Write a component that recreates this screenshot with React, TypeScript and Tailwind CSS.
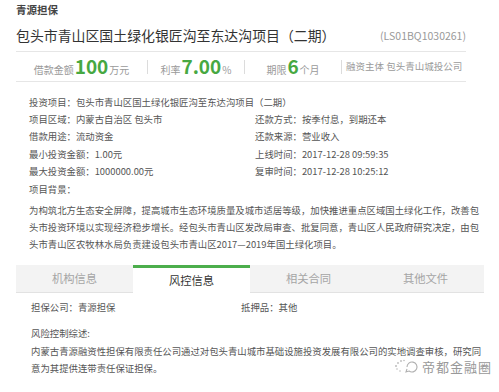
import React from 'react';

const font = { fontFamily: '"Noto Sans CJK SC", "Noto Sans", sans-serif' };

const Sep = () => <span className="w-px h-[14px] bg-[#dcdcdc]" />;

const Stat: React.FC<{ label: string; value: string; unit: string; w: string }> = ({ label, value, unit, w }) => (
  <div className={`flex items-baseline justify-center ${w}`}>
    <span className="text-[10px] text-[#9a9a9a]">{label}</span>
    <span className="text-[19px] font-bold text-[#47a842] leading-none mx-[1px]">{value}</span>
    <span className="text-[10px] text-[#9a9a9a]">{unit}</span>
  </div>
);

const InfoRow: React.FC<{ left: string; right?: string }> = ({ left, right }) => (
  <div className="flex h-[17.4px] items-center">
    <div className="w-[226px] whitespace-nowrap">{left}</div>
    {right && <div className="whitespace-nowrap">{right}</div>}
  </div>
);

const tabs = ['机构信息', '风控信息', '相关合同', '其他文件'];

export default function App() {
  return (
    <div className="w-[499px] h-[392px] bg-white relative overflow-hidden" style={font}>
      <div className="px-4 w-[482px]">
        <div className="h-[20px] flex items-center text-[10.5px] font-bold text-[#444]">青源担保</div>
        <div className="h-[32px] flex items-center justify-between border-b border-[#e6e6e6]">
          <span className="text-[13.9px] text-[#333]">包头市青山区国土绿化银匠沟至东达沟项目（二期）</span>
          <span className="text-[10.5px] text-[#999]">(LS01BQ1030261)</span>
        </div>
        <div className="h-[30px] flex items-center border-b border-[#e6e6e6]">
          <Stat label="借款金额" value="100" unit="万元" w="w-[131px]" />
          <Sep />
          <Stat label="利率" value="7.00" unit="%" w="w-[96px]" />
          <Sep />
          <Stat label="期限" value="6" unit="个月" w="w-[96px]" />
          <Sep />
          <div className="flex-1 pl-[4px] whitespace-nowrap text-[9.5px] text-[#9a9a9a]">融资主体 包头青山城投公司</div>
        </div>
        <div className="pt-[11px] pl-[13px] text-[9.4px] text-[#555]">
          <InfoRow left="投资项目：包头市青山区国土绿化银匠沟至东达沟项目（二期）" />
          <InfoRow left="项目区域：内蒙古自治区 包头市" right="还款方式：按季付息，到期还本" />
          <InfoRow left="借款用途：流动资金" right="还款来源：营业收入" />
          <InfoRow left="最小投资金额：1.00元" right="上线时间：2017-12-28 09:59:35" />
          <InfoRow left="最大投资金额：1000000.00元" right="复审时间：2017-12-28 10:25:12" />
          <InfoRow left="项目背景：" />
          <p className="leading-[16.6px] pt-[5px] whitespace-nowrap">
            为构筑北方生态安全屏障，提高城市生态环境质量及城市适居等级，加快推进重点区域国土绿化工作，改善包
            <br />
            头市投资环境以实现经济稳步增长。经包头市青山区发改局审查、批复同意，青山区人民政府研究决定，由包
            <br />
            头市青山区农牧林水局负责建设包头市青山区2017—2019年国土绿化项目。
          </p>
        </div>
        <div className="mt-[13px] grid grid-cols-4 h-[28px] w-[468px]">
          {tabs.map((t, i) =>
            i === 1 ? (
              <div key={t} className="flex items-center justify-center border-t-[3px] border-[#4cae4c] bg-white text-[11.3px] text-[#333]">
                {t}
              </div>
            ) : (
              <div key={t} className="flex items-center justify-center bg-[#f3f3f3] border-b border-[#e2e2e2] text-[11.3px] text-[#a5a5a5]">
                {t}
              </div>
            )
          )}
        </div>
        <div className="h-[28px] flex items-center text-[9.4px] text-[#555] pl-[15px]">
          <div className="w-[210px]">担保公司：青源担保</div>
          <div>抵押品：其他</div>
        </div>
        <div className="pl-[15px] pt-[4px] text-[9.4px] text-[#555] leading-[17.4px] whitespace-nowrap">
          <div>风险控制综述:</div>
          <div>内蒙古青源融资性担保有限责任公司通过对包头青山城市基础设施投资发展有限公司的实地调查审核，研究同</div>
          <div>意为其提供连带责任保证担保。</div>
        </div>
      </div>
      <div className="absolute left-[393px] top-[357px] flex items-center gap-[3px] whitespace-nowrap text-[#999]">
        <svg width="26" height="18" viewBox="0 0 26 18" fill="none">
          <g fill="#bdbdbd">
            <circle cx="3" cy="8" r="1" />
            <circle cx="5" cy="5" r="0.9" />
            <circle cx="8" cy="3" r="0.9" />
            <circle cx="11" cy="2.5" r="0.8" />
            <circle cx="4" cy="11" r="0.8" />
            <circle cx="7" cy="13" r="0.8" />
          </g>
          <path d="M14 9a5 5 0 1 1 2 4l-3 1 1-3" stroke="#b0b0b0" strokeWidth="1.1" />
        </svg>
        <span className="text-[13px] tracking-[1px]">帝都金融圈</span>
      </div>
    </div>
  );
}
